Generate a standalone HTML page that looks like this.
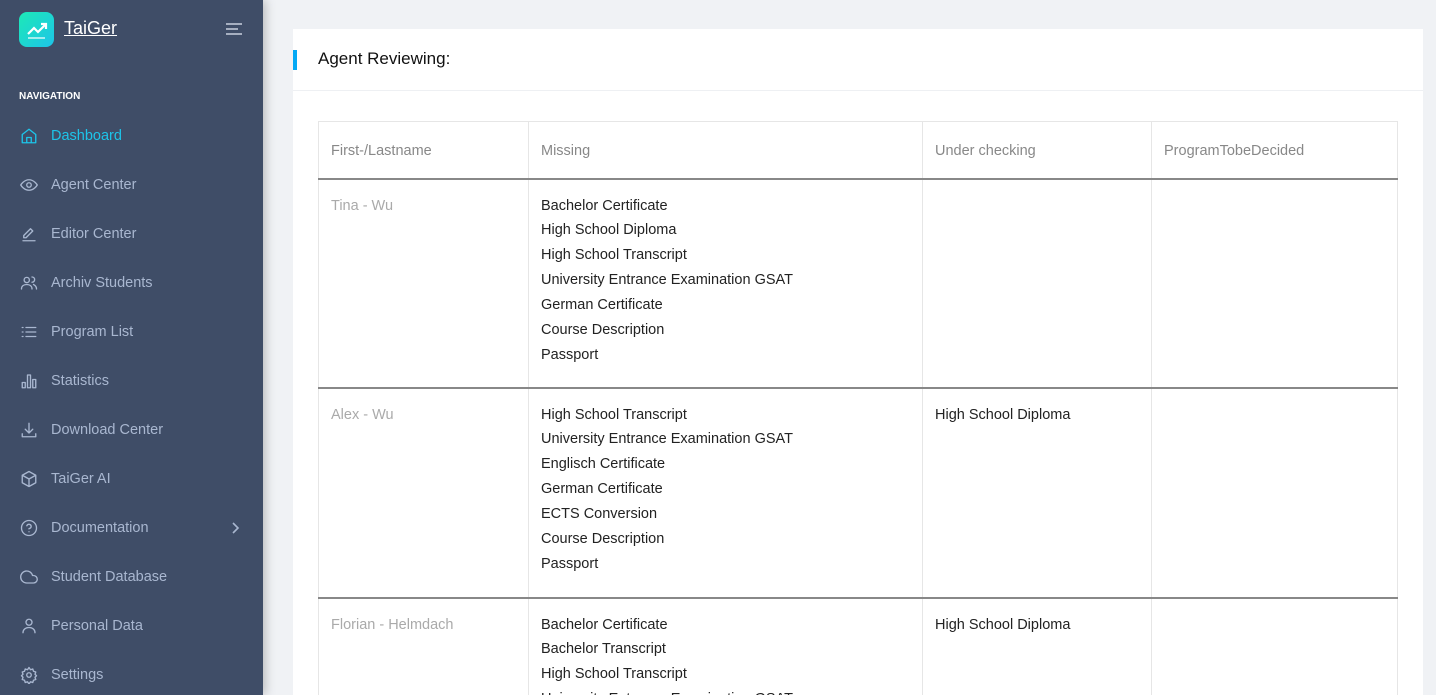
<!DOCTYPE html>
<html style="width:1436px;height:695px;overflow:hidden"><head><style>
*{margin:0;padding:0;box-sizing:border-box}
body{width:1436px;height:695px;overflow:hidden;background:#f0f2f5;font-family:"Liberation Sans",sans-serif;font-size:14px;position:relative}
.sb{position:absolute;left:0;top:0;width:263px;height:695px;background:#3f4d67;box-shadow:2px 0 10px rgba(0,0,0,.25);z-index:2}
.logo{position:absolute;left:19px;top:12px;width:35px;height:35px;border-radius:8px;background:linear-gradient(135deg,#1de9b6,#1dc4e9)}
.brand{position:absolute;left:64px;top:18px;color:#fff;font-size:18px;text-decoration:underline}
.nav{position:absolute;left:19px;top:91px;color:#fff;font-size:10px;font-weight:bold}
.it{position:absolute;left:20px;height:20px;display:flex;align-items:center;color:#a9b7d0;font-size:14.5px}
.it svg{width:18px;height:18px;margin-right:13px;fill:none;stroke:#a9b7d0;stroke-width:1.8;stroke-linecap:round;stroke-linejoin:round}
.it.a{color:#1dc4e9}.it.a svg{stroke:#1dc4e9}
.card{position:absolute;left:293px;top:29px;width:1130px;height:666px;background:#fff;overflow:hidden}
.hd{height:62px;border-bottom:1px solid #eef0f3;position:relative}
.hd:before{content:"";position:absolute;left:0;top:21px;width:4px;height:20px;background:#04a9f5}
.hd span{position:absolute;left:25px;top:20px;font-size:17px;color:#111}
table{position:absolute;left:25px;top:92px;width:1080px;border-collapse:collapse}
td,th{border:1px solid #e6e6e6;vertical-align:top;text-align:left;font-weight:normal;padding:0 12px}
th{height:57px;vertical-align:middle;color:#888;font-size:14.5px;border-bottom:2px solid #888;padding-top:3px}
td{color:#222;line-height:24.9px;padding-top:14px;padding-bottom:10px;font-size:14.5px}
tr.r td{border-bottom:2px solid #888}
td.n{color:#aaa}
</style></head><body>
<div class="sb">
<div class="logo"><svg width="35" height="35" viewBox="0 0 35 35"><path d="M9 22l6-6 4 4 8-8M22 12h5v5" stroke="#fff" stroke-width="2.2" fill="none"/><path d="M9 26h17" stroke="#fff" stroke-width="1.5" opacity=".8"/></svg></div>
<div class="brand">TaiGer</div>
<svg style="position:absolute;left:225px;top:23px" width="18" height="12"><path d="M1 1h16M1 6h12M1 11h16" stroke="#c8d0de" stroke-width="1.6"/></svg>
<div class="nav">NAVIGATION</div>
<div class="it a" style="top:126px"><svg viewBox="0 0 24 24"><path d="M3 10l9-7 9 7v11H3z M9 21v-7h6v7"/></svg>Dashboard</div>
<div class="it" style="top:175px"><svg viewBox="0 0 24 24"><path d="M1 12s4-7 11-7 11 7 11 7-4 7-11 7S1 12 1 12z"/><circle cx="12" cy="12" r="3"/></svg>Agent Center</div>
<div class="it" style="top:224px"><svg viewBox="0 0 24 24"><path d="M4 21h16M14 5l3 3-9 9H5v-3z"/></svg>Editor Center</div>
<div class="it" style="top:273px"><svg viewBox="0 0 24 24"><circle cx="9" cy="8" r="3.5"/><path d="M2 20c0-4 3-6 7-6s7 2 7 6M16 4a3.5 3.5 0 010 7M18 14c2 1 4 3 4 6"/></svg>Archiv Students</div>
<div class="it" style="top:322px"><svg viewBox="0 0 24 24"><path d="M8 6h13M8 12h13M8 18h13M3 6h1M3 12h1M3 18h1"/></svg>Program List</div>
<div class="it" style="top:371px"><svg viewBox="0 0 24 24"><path d="M3 14h4v7H3zM10 4h4v17h-4zM17 10h4v11h-4z"/></svg>Statistics</div>
<div class="it" style="top:420px"><svg viewBox="0 0 24 24"><path d="M3 17v4h18v-4M12 3v13M7 11l5 5 5-5"/></svg>Download Center</div>
<div class="it" style="top:469px"><svg viewBox="0 0 24 24"><path d="M12 2l9 5v10l-9 5-9-5V7zM3 7l9 5 9-5M12 12v10"/></svg>TaiGer AI</div>
<div class="it" style="top:518px"><svg viewBox="0 0 24 24"><circle cx="12" cy="12" r="10"/><path d="M9.1 9a3 3 0 015.8 1c0 2-3 3-3 3M12 17h.01"/></svg>Documentation</div>
<svg style="position:absolute;left:230px;top:522px" width="10" height="12"><path d="M3 1l5 5-5 5" stroke="#a9b7d0" stroke-width="1.6" fill="none"/></svg>
<div class="it" style="top:567px"><svg viewBox="0 0 24 24"><path d="M18 10h-1.3A8 8 0 109 20h9a5 5 0 000-10z"/></svg>Student Database</div>
<div class="it" style="top:616px"><svg viewBox="0 0 24 24"><circle cx="12" cy="7" r="4"/><path d="M4 21c0-4 3-7 8-7s8 3 8 7"/></svg>Personal Data</div>
<div class="it" style="top:665px"><svg viewBox="0 0 24 24"><circle cx="12" cy="12" r="3"/><path d="M12 2l2 3 3-1 1 3 3 1-1 3 2 2-2 2 1 3-3 1-1 3-3-1-2 3-2-3-3 1-1-3-3-1 1-3-2-2 2-2-1-3 3-1 1-3 3 1z"/></svg>Settings</div>
</div>
<div class="card">
<div class="hd"><span>Agent Reviewing:</span></div>
<table>
<tr><th style="width:210px">First-/Lastname</th><th style="width:394px">Missing</th><th style="width:229px">Under checking</th><th>ProgramTobeDecided</th></tr>
<tr class="r" style="height:209px"><td class="n">Tina - Wu</td><td>Bachelor Certificate<br>High School Diploma<br>High School Transcript<br>University Entrance Examination GSAT<br>German Certificate<br>Course Description<br>Passport</td><td></td><td></td></tr>
<tr class="r" style="height:210px"><td class="n">Alex - Wu</td><td>High School Transcript<br>University Entrance Examination GSAT<br>Englisch Certificate<br>German Certificate<br>ECTS Conversion<br>Course Description<br>Passport</td><td>High School Diploma</td><td></td></tr>
<tr><td class="n">Florian - Helmdach</td><td>Bachelor Certificate<br>Bachelor Transcript<br>High School Transcript<br>University Entrance Examination GSAT</td><td>High School Diploma</td><td></td></tr>
</table>
</div>
</body></html>
